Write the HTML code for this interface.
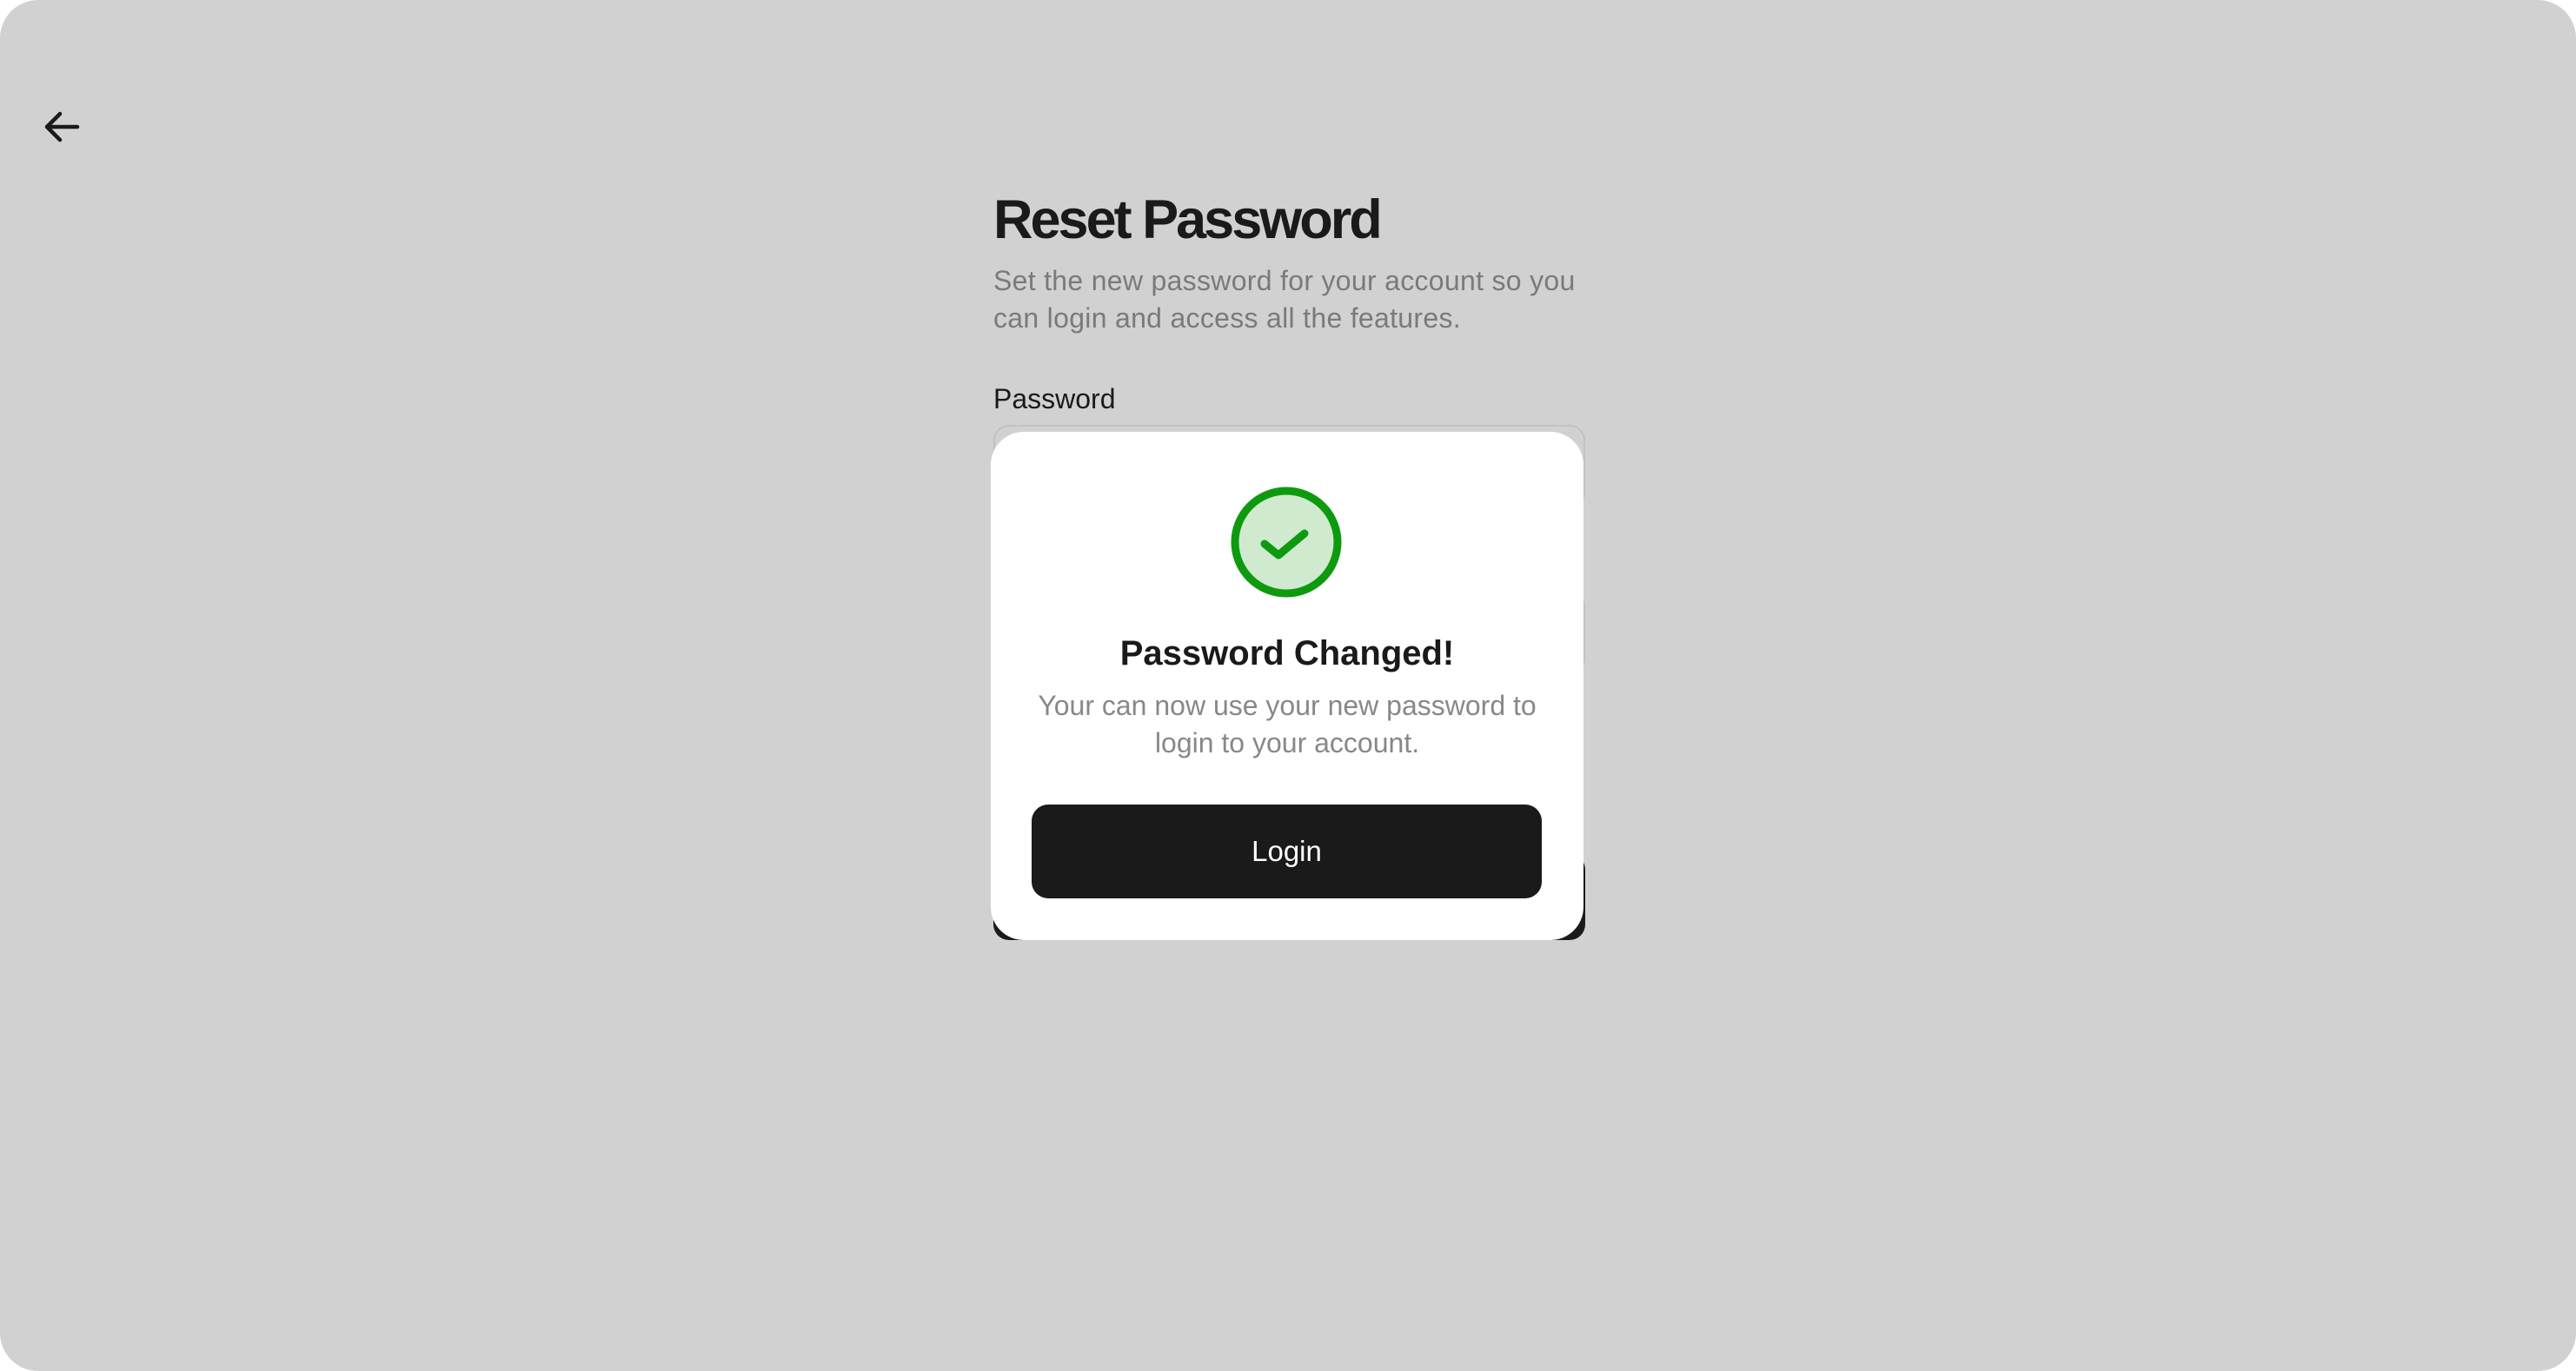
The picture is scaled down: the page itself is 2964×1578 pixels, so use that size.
<!DOCTYPE html>
<html><head><style>
html,body{margin:0;padding:0;background:#fff;}
body{width:2964px;height:1578px;position:relative;overflow:hidden;font-family:"Liberation Sans",sans-serif;}
.bg{position:absolute;left:0;top:0;width:2964px;height:1578px;background:#d1d1d1;border-radius:44px;}
.abs{position:absolute;}
</style></head><body>
<div class="bg"></div>
<svg class="abs" style="left:0;top:0" width="200" height="200"><path d="M89 146H55M69 131L54 146L69 161" stroke="#1a1a1a" stroke-width="4.5" fill="none" stroke-linecap="round" stroke-linejoin="round"/></svg>
<div class="abs" style="left:1143px;top:215px;font-size:63px;font-weight:bold;letter-spacing:-3px;color:#1a1a1a;line-height:76px">Reset Password</div>
<div class="abs" style="left:1143px;top:302px;font-size:32px;color:#7a7a7a;line-height:43px;width:675px;letter-spacing:0.3px">Set the new password for your account so you can login and access all the features.</div>
<div class="abs" style="left:1143px;top:441px;font-size:32px;color:#1a1a1a;line-height:36px">Password</div>
<div class="abs" style="left:1143px;top:489px;width:677px;height:92px;border:2px solid #c2c2c2;border-radius:18px;"></div>
<div class="abs" style="left:1143px;top:680px;width:677px;height:92px;border:2px solid #c2c2c2;border-radius:18px;"></div>
<div class="abs" style="left:1143px;top:983px;width:681px;height:99px;background:#1a1a1a;border-radius:18px;"></div>
<div class="abs" style="left:1140px;top:497px;width:682px;height:585px;background:#fff;border-radius:38px;"></div>
<svg class="abs" style="left:1410px;top:554px" width="140" height="140"><circle cx="70" cy="70" r="59" fill="#cfeacf" stroke="#0e9a0e" stroke-width="9"/><path d="M45 72L61 85L91 60" stroke="#0e9a0e" stroke-width="9" fill="none" stroke-linecap="round" stroke-linejoin="round"/></svg>
<div class="abs" style="left:1140px;top:724px;width:682px;text-align:center;font-size:40px;font-weight:bold;color:#1a1a1a;line-height:56px">Password Changed!</div>
<div class="abs" style="left:1170px;top:791px;width:622px;text-align:center;font-size:32px;color:#888;line-height:43px">Your can now use your new password to login to your account.</div>
<div class="abs" style="left:1187px;top:926px;width:587px;height:108px;background:#1a1a1a;border-radius:19px;color:#fff;font-size:33px;text-align:center;line-height:108px">Login</div>
</body></html>
